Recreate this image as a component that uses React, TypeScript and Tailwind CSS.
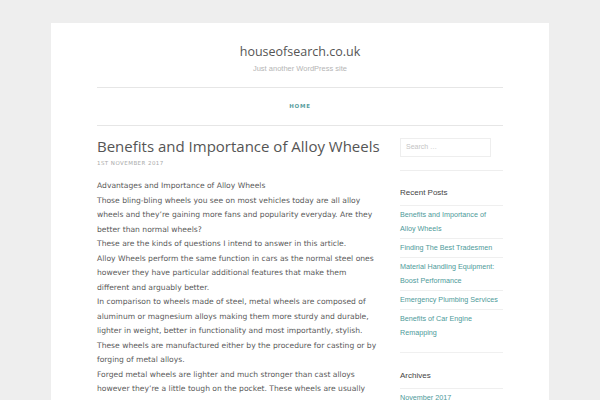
const recent = [
  "Benefits and Importance of Alloy Wheels",
  "Finding The Best Tradesmen",
  "Material Handling Equipment: Boost Performance",
  "Emergency Plumbing Services",
  "Benefits of Car Engine Remapping",
];

const paragraphs = [
  "Advantages and Importance of Alloy Wheels",
  "Those bling-bling wheels you see on most vehicles today are all alloy wheels and they\u2019re gaining more fans and popularity everyday. Are they better than normal wheels?",
  "These are the kinds of questions I intend to answer in this article.",
  "Alloy Wheels perform the same function in cars as the normal steel ones however they have particular additional features that make them different and arguably better.",
  "In comparison to wheels made of steel, metal wheels are composed of aluminum or magnesium alloys making them more sturdy and durable, lighter in weight, better in functionality and most importantly, stylish. These wheels are manufactured either by the procedure for casting or by forging of metal alloys.",
  "Forged metal wheels are lighter and much stronger than cast alloys however they\u2019re a little tough on the pocket. These wheels are usually the preferred choice for high heeled sports cars but that does not mean you can\u2019t match them on another vehicle. Comparatively, cast aluminum wheels are more affordable and easier to find.",
];

export default function App() {
  return (
    <div className="h-screen overflow-hidden bg-[#eeeeee] pt-[23px]">
      <div className="mx-auto w-[498px] bg-white px-[46px] pb-10">
        {/* Site header */}
        <header className="pt-[21px] text-center">
          <h1 className="text-[12.5px] leading-[16px] text-[#555]" style={{ fontFamily: "'Open Sans', sans-serif" }}>
            houseofsearch.co.uk
          </h1>
          <p className="mt-[4px] text-[7.5px] leading-[10px] text-[#b5b5b5]" style={{ fontFamily: "'Liberation Sans', Arial, sans-serif" }}>
            Just another WordPress site
          </p>
        </header>

        <nav className="mt-[13px] flex h-[39px] items-center justify-center border-y border-[#e6e6e6]">
          <span className="text-[5.5px] font-bold tracking-[0.14em] text-[#5a9e9e]" style={{ fontFamily: "'DejaVu Sans', sans-serif" }}>
            HOME
          </span>
        </nav>

        <div className="flex">
          {/* Post */}
          <main className="w-[282px]">
            <h2 className="mt-[10px] whitespace-nowrap text-[15px] leading-[20px] text-[#555]" style={{ fontFamily: "'Open Sans', sans-serif" }}>
              Benefits and Importance of Alloy Wheels
            </h2>
            <div className="mt-[3px] text-[5.5px] leading-[8px] tracking-[0.08em] text-[#aaa]" style={{ fontFamily: "'DejaVu Sans', sans-serif" }}>
              1ST NOVEMBER 2017
            </div>
            <div className="mt-[12px] text-[7.6px] leading-[14.5px] text-[#5a5a5a]" style={{ fontFamily: "'DejaVu Sans', Verdana, sans-serif" }}>
              {paragraphs.map((p, i) => (
                <p key={i}>{p}</p>
              ))}
            </div>
          </main>

          {/* Sidebar */}
          <aside className="ml-auto w-[103px]" style={{ fontFamily: "'Liberation Sans', Arial, sans-serif" }}>
            <div className="mt-[12px] border-b border-[#eeeeee] pb-[13px]">
              <div className="flex h-[19px] w-[91px] items-center border border-[#eeeeee] px-[5px] text-[7px] text-[#c4c4c4]">
                Search …
              </div>
            </div>

            <section className="mt-[16px] border-b border-[#f0f0f0] pb-[10px]">
              <h3 className="pb-[6px] text-[8px] leading-[12px] text-[#444]">Recent Posts</h3>
              <ul>
                {recent.map((r, i) => (
                  <li key={i} className="border-t border-[#efefef] pt-[2px] pb-[2px] text-[7.2px] leading-[14px] text-[#4e9a9a]">
                    {r}
                  </li>
                ))}
              </ul>
            </section>

            <section className="mt-[17px]">
              <h3 className="pb-[6px] text-[8px] leading-[12px] text-[#444]">Archives</h3>
              <ul>
                <li className="border-t border-[#efefef] pt-[2px] pb-[2px] text-[7.2px] leading-[14px] text-[#4e9a9a]">
                  November 2017
                </li>
              </ul>
            </section>
          </aside>
        </div>
      </div>
    </div>
  );
}
